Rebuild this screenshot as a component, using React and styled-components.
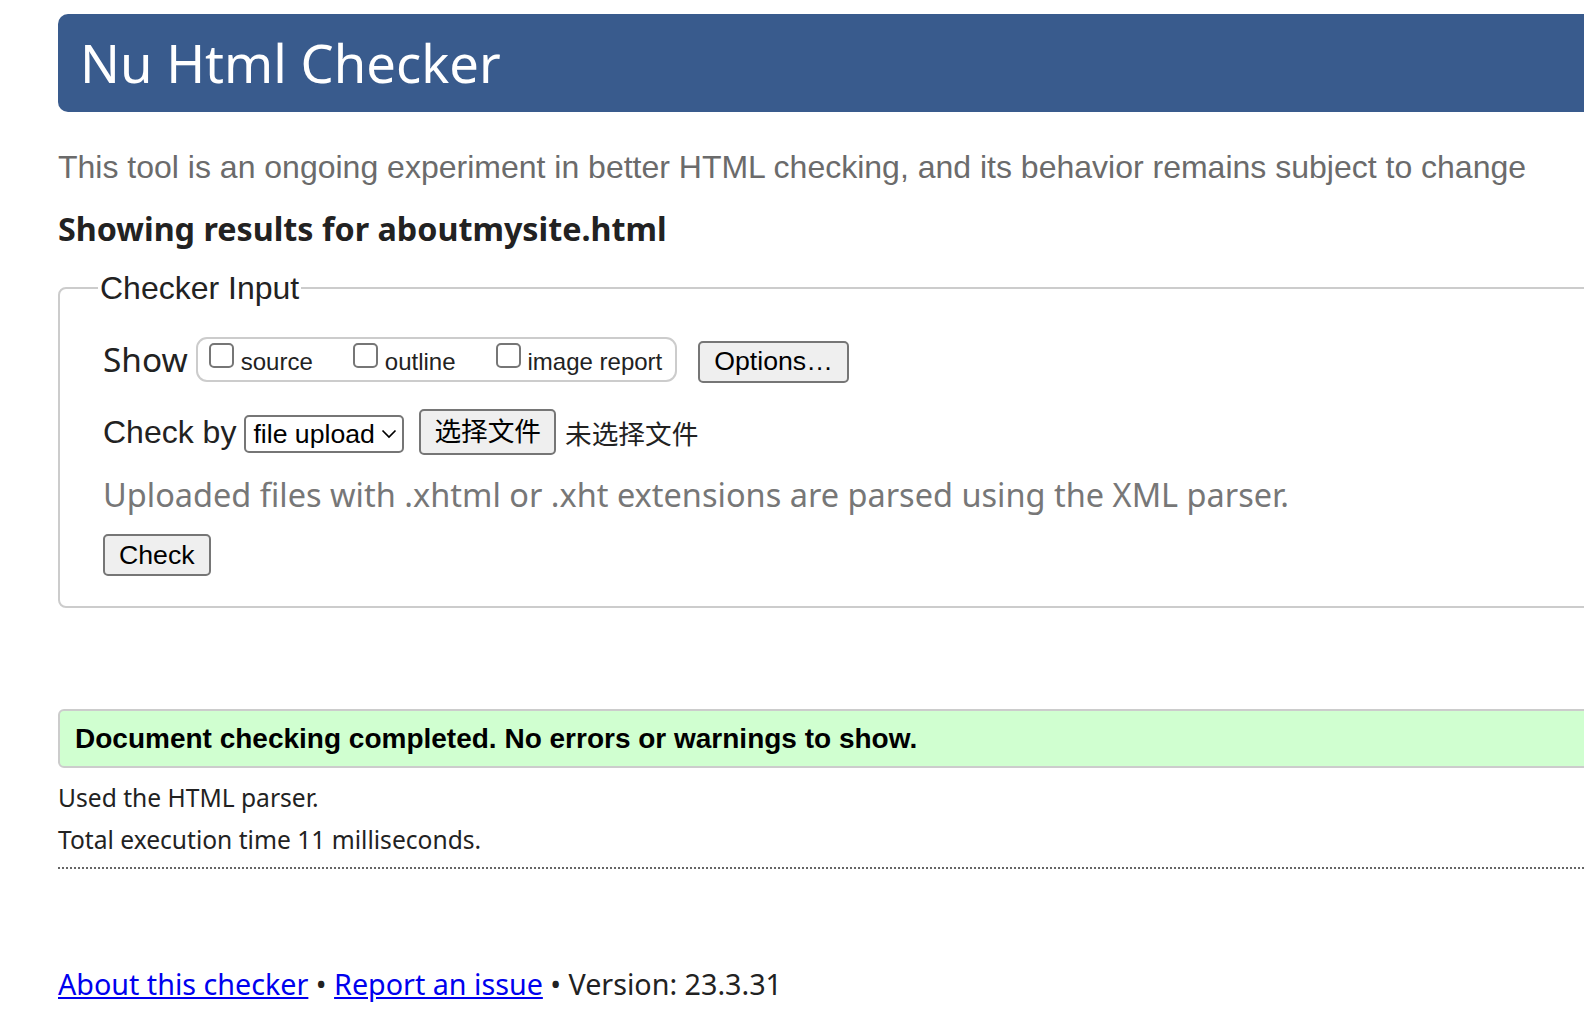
import React from "react";
import styled, { createGlobalStyle } from "styled-components";

const SEGOE = `"Noto Sans", "Open Sans", sans-serif`;
const ARIAL = `"Liberation Sans", Arial, "Noto Sans CJK SC", sans-serif`;

const GlobalStyle = createGlobalStyle`
  html, body {
    margin: 0;
    padding: 0;
    background: #fff;
    overflow-x: hidden;
  }
  * { box-sizing: border-box; }
`;

const Page = styled.div`
  padding: 14px 0 40px 58px;
  margin-right: -80px;
  font-family: ${SEGOE};
  color: #222;
`;

const Header = styled.h1`
  margin: 0;
  height: 98px;
  padding-left: 22px;
  background: #395b8d;
  color: #fff;
  border-radius: 10px;
  font-family: ${SEGOE};
  font-weight: 400;
  font-size: 52.6px;
  line-height: 97px;
  white-space: nowrap;
`;

const Tagline = styled.p`
  margin: 35px 0 0;
  font-family: ${ARIAL};
  font-size: 32px;
  line-height: 40px;
  color: #6b6b6b;
  white-space: nowrap;
`;

const Heading = styled.h2`
  margin: 21px 0 0;
  font-family: ${SEGOE};
  font-weight: 700;
  font-size: 32.3px;
  line-height: 40px;
  color: #222;
  white-space: nowrap;
`;

const Fieldset = styled.fieldset`
  margin: 22px 0 0;
  min-width: 0;
  border: 2px solid #cccccc;
  border-radius: 8px;
  padding: 0 0 30px 43px;
`;

const Legend = styled.legend`
  margin-left: -5px;
  padding: 0 2px;
  font-family: ${ARIAL};
  font-size: 32px;
  line-height: 36px;
  color: #222;
`;

const Row = styled.div`
  display: flex;
  align-items: center;
  height: 46px;
  margin-top: ${(p) => p.$top}px;
`;

const RowLabel = styled.span`
  font-family: ${(p) => (p.$segoe ? SEGOE : ARIAL)};
  font-size: ${(p) => p.$size}px;
  color: #222;
  margin-right: ${(p) => p.$gap}px;
  white-space: nowrap;
`;

const CheckGroup = styled.div`
  display: flex;
  align-items: center;
  gap: 40px;
  height: 45px;
  padding: 0 13px 0 11px;
  border: 2px solid #cccccc;
  border-radius: 11px;
  margin-right: 21px;
`;

const CheckItem = styled.label`
  display: flex;
  align-items: center;
  gap: 7px;
  padding-top: 6px;
  font-family: ${ARIAL};
  font-size: 24px;
  color: #222;
  white-space: nowrap;
`;

const Box = styled.input.attrs({ type: "checkbox" })`
  appearance: none;
  -webkit-appearance: none;
  margin: -13px 0 0;
  width: 25px;
  height: 25px;
  border: 2px solid #767676;
  border-radius: 5px;
  background: #fff;
`;

const Button = styled.button`
  height: ${(p) => p.$h || 42}px;
  margin-top: ${(p) => p.$shift || 0}px;
  padding: 0 ${(p) => p.$pad || 14}px;
  background: #efefef;
  border: 2px solid #767676;
  border-radius: 5px;
  font-family: ${ARIAL};
  font-size: 26.67px;
  color: #000;
  line-height: 1;
  white-space: nowrap;
`;

const SelectWrap = styled.div`
  position: relative;
  margin-top: 3px;
  margin-right: 15px;
`;

const Select = styled.select`
  appearance: none;
  -webkit-appearance: none;
  display: block;
  width: 160px;
  height: 38px;
  padding: 0 0 0 7px;
  border: 2px solid #767676;
  border-radius: 5px;
  background: #fff;
  font-family: ${ARIAL};
  font-size: 26.67px;
  color: #000;
`;

const Chevron = styled.svg`
  position: absolute;
  right: 7px;
  top: 14px;
  pointer-events: none;
`;

const NoFile = styled.span`
  margin-left: 9px;
  font-family: ${ARIAL};
  font-size: 26.67px;
  color: #222;
`;

const Hint = styled.p`
  margin: 20px 0 0;
  font-family: ${SEGOE};
  font-size: 32.5px;
  line-height: 40px;
  color: #777;
  white-space: nowrap;
`;

const CheckButtonRow = styled.div`
  margin-top: 19px;
`;

const Result = styled.div`
  margin-top: 101px;
  height: 59px;
  display: flex;
  align-items: center;
  padding-left: 15px;
  background: #d0ffd0;
  border: 2px solid #cccccc;
  border-radius: 6px;
  font-family: ${ARIAL};
  font-weight: 700;
  font-size: 28px;
  color: #000;
  white-space: nowrap;
`;

const Info = styled.p`
  margin: ${(p) => p.$top}px 0 0;
  font-family: ${SEGOE};
  font-size: 24.6px;
  line-height: 36px;
  color: #222;
  white-space: nowrap;
`;

const Rule = styled.hr`
  margin: 9px 0 0;
  border: none;
  border-top: 2px dotted #666;
  height: 0;
`;

const Footer = styled.p`
  margin: 95px 0 0;
  font-family: ${SEGOE};
  font-size: 28.7px;
  line-height: 40px;
  color: #222;
  white-space: nowrap;
`;

const Link = styled.a`
  color: #0000ee;
  text-decoration: underline;
`;

export default function App() {
  return (
    <>
      <GlobalStyle />
      <Page>
        <Header>Nu Html Checker</Header>
        <Tagline>
          This tool is an ongoing experiment in better HTML checking, and its behavior remains subject to change
        </Tagline>
        <Heading>Showing results for aboutmysite.html</Heading>
        <Fieldset>
          <Legend>Checker Input</Legend>
          <Row $top={30}>
            <RowLabel $segoe $size={33.4} $gap={8}>Show</RowLabel>
            <CheckGroup>
              <CheckItem><Box />source</CheckItem>
              <CheckItem><Box />outline</CheckItem>
              <CheckItem><Box />image report</CheckItem>
            </CheckGroup>
            <Button type="button" $shift={5}>Options…</Button>
          </Row>
          <Row $top={27}>
            <RowLabel $size={32} $gap={8}>Check by</RowLabel>
            <SelectWrap>
              <Select defaultValue="file">
                <option value="file">file upload</option>
              </Select>
              <Chevron width="16" height="10" viewBox="0 0 16 10">
                <path d="M1.5 1.5 L8 8 L14.5 1.5" fill="none" stroke="#000" strokeWidth="1.7" />
              </Chevron>
            </SelectWrap>
            <Button type="button" $h={46} $pad={13}>选择文件</Button>
            <NoFile>未选择文件</NoFile>
          </Row>
          <Hint>Uploaded files with .xhtml or .xht extensions are parsed using the XML parser.</Hint>
          <CheckButtonRow>
            <Button type="submit">Check</Button>
          </CheckButtonRow>
        </Fieldset>
        <Result>Document checking completed. No errors or warnings to show.</Result>
        <Info $top={12}>Used the HTML parser.</Info>
        <Info $top={6}>Total execution time 11 milliseconds.</Info>
        <Rule />
        <Footer>
          <Link href="#about">About this checker</Link> • <Link href="#issue">Report an issue</Link> • Version: 23.3.31
        </Footer>
      </Page>
    </>
  );
}
